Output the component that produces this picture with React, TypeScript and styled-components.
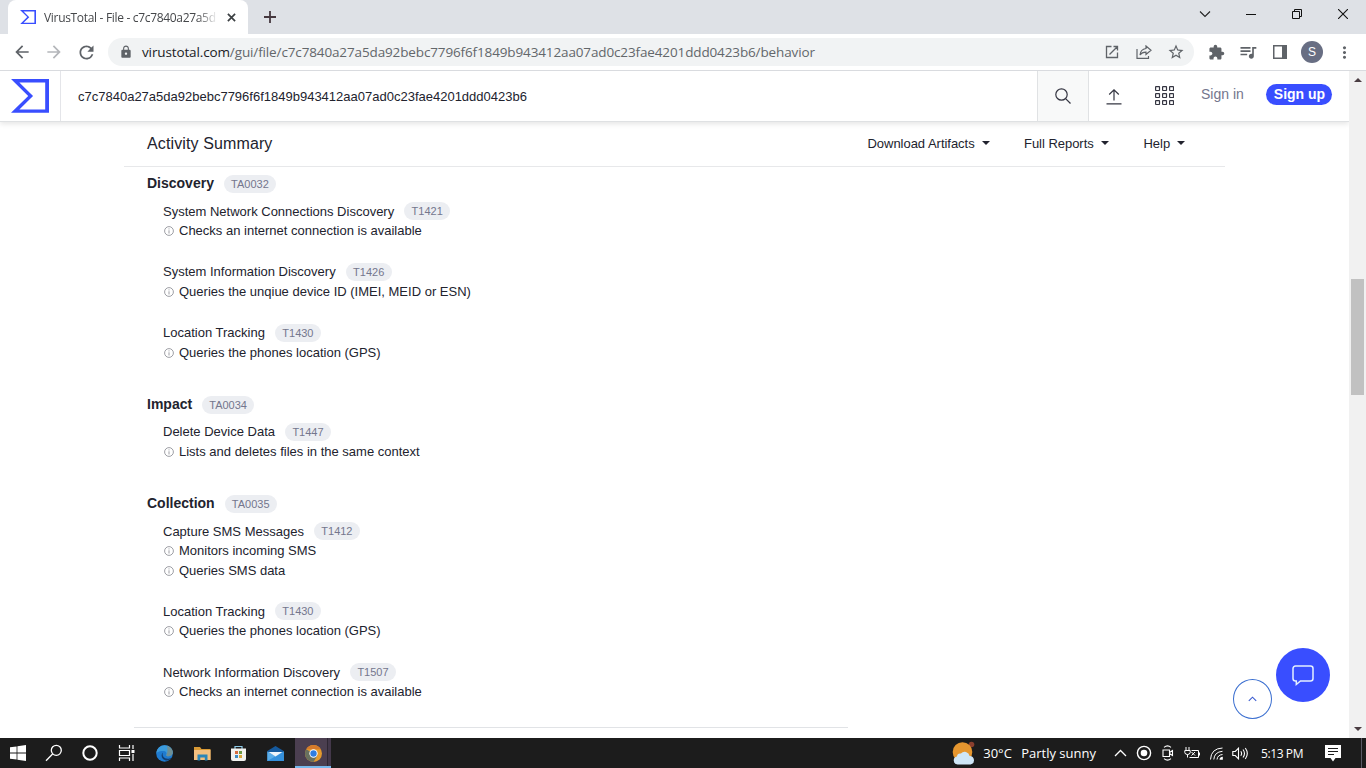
import React from "react";
import styled, { createGlobalStyle } from "styled-components";
import {
  MdArrowBack,
  MdArrowForward,
  MdRefresh,
  MdLock,
  MdExtension,
  MdQueueMusic,
  MdStarBorder,
  MdMoreVert,
} from "react-icons/md";

interface Technique {
  name: string;
  code: string;
  signatures: string[];
}

interface Tactic {
  name: string;
  code: string;
  techniques: Technique[];
}

const HASH = "c7c7840a27a5da92bebc7796f6f1849b943412aa07ad0c23fae4201ddd0423b6";

const tactics: Tactic[] = [
  {
    name: "Discovery",
    code: "TA0032",
    techniques: [
      {
        name: "System Network Connections Discovery",
        code: "T1421",
        signatures: ["Checks an internet connection is available"],
      },
      {
        name: "System Information Discovery",
        code: "T1426",
        signatures: ["Queries the unqiue device ID (IMEI, MEID or ESN)"],
      },
      {
        name: "Location Tracking",
        code: "T1430",
        signatures: ["Queries the phones location (GPS)"],
      },
    ],
  },
  {
    name: "Impact",
    code: "TA0034",
    techniques: [
      {
        name: "Delete Device Data",
        code: "T1447",
        signatures: ["Lists and deletes files in the same context"],
      },
    ],
  },
  {
    name: "Collection",
    code: "TA0035",
    techniques: [
      {
        name: "Capture SMS Messages",
        code: "T1412",
        signatures: ["Monitors incoming SMS", "Queries SMS data"],
      },
      {
        name: "Location Tracking",
        code: "T1430",
        signatures: ["Queries the phones location (GPS)"],
      },
      {
        name: "Network Information Discovery",
        code: "T1507",
        signatures: ["Checks an internet connection is available"],
      },
    ],
  },
];

export default function App() {
  return (
    <Screen>
      <GlobalStyle />
      <TabStrip />
      <Toolbar />
      <Viewport>
        <Page>
          <SiteHeader />
          <Report />
          <BackToTop>
            <svg width="9" height="6" viewBox="0 0 9 6" fill="none" stroke="#3a5bd0" strokeWidth="1.1">
              <path d="M.8 4.800l3.700-3.600 3.700 3.600" />
            </svg>
          </BackToTop>
          <ChatButton>
            <svg width="24" height="24" viewBox="0 0 24 24" fill="none" stroke="#e4f0ff" strokeWidth="1.5">
              <path d="M4.5 3h15A2.500 2.500 0 0 1 22 5.500v10a2.500 2.500 0 0 1-2.500 2.500H9.500L5.300 21.500V18H4.500A2.500 2.500 0 0 1 2 15.500v-10A2.500 2.500 0 0 1 4.500 3z" />
            </svg>
          </ChatButton>
        </Page>
        <Scrollbar>
          <ScrollArrow />
          <ScrollThumb />
          <ScrollArrow $down />
        </Scrollbar>
      </Viewport>
      <Taskbar />
    </Screen>
  );
}

function VtLogo({ width, color = "#394eff" }: { width: number; color?: string }) {
  return (
    <svg width={width} height={width * 0.89} viewBox="0 0 100 89" fill={color}>
      <path fillRule="evenodd" d="M45.292 44.500 0 89h100V0H0l45.292 44.500zM90 80H22l35.987-35.200L22 9h68v71z" />
    </svg>
  );
}

function TabStrip() {
  return (
    <Strip>
      <Tab>
        <VtLogo width={16} />
        <TabTitle>VirusTotal - File - c7c7840a27a5d</TabTitle>
        <svg width="9" height="9" viewBox="0 0 10 10" stroke="#3c4043" strokeWidth="1.900">
          <path d="M1 1l8 8M9 1l-8 8" />
        </svg>
      </Tab>
      <NewTab>
        <svg width="12" height="12" viewBox="0 0 12 12" stroke="#45383f" strokeWidth="1.800">
          <path d="M6 0v12M0 6h12" />
        </svg>
      </NewTab>
      <WindowButtons>
        <WindowButton>
          <svg width="12" height="8" viewBox="0 0 12 8" fill="none" stroke="#222" strokeWidth="1.100">
            <path d="M1 1.500l5 5 5-5" />
          </svg>
        </WindowButton>
        <WindowButton>
          <svg width="10" height="10" viewBox="0 0 10 10" stroke="#111">
            <path d="M0 5.500h10" />
          </svg>
        </WindowButton>
        <WindowButton>
          <svg width="10" height="10" viewBox="0 0 10 10" fill="none" stroke="#111">
            <path d="M.5 2.500h7v7h-7zM2.500 2.500v-2h7v7h-2" />
          </svg>
        </WindowButton>
        <WindowButton>
          <svg width="10" height="10" viewBox="0 0 10 10" stroke="#111" strokeWidth="1.100">
            <path d="M0 0l10 10M10 0L0 10" />
          </svg>
        </WindowButton>
      </WindowButtons>
    </Strip>
  );
}

function Toolbar() {
  return (
    <ToolbarRow>
      <ToolButton><MdArrowBack size={20} /></ToolButton>
      <ToolButton $color="#b4b6ba"><MdArrowForward size={20} /></ToolButton>
      <ToolButton><MdRefresh size={21} /></ToolButton>
      <Omnibox>
        <MdLock size={14} />
        <Url>
          <b>virustotal.com</b>/gui/file/{HASH}/behavior
        </Url>
        <ToolButton>
          <svg width="14" height="14" viewBox="0 0 14 14" fill="none" stroke="currentColor" strokeWidth="1.300">
            <path d="M6.500 1.500h-5v11h11v-5M8.500 1.500h4v4M12.500 1.500l-8 8" />
          </svg>
        </ToolButton>
        <ToolButton>
          <svg width="16" height="14" viewBox="0 0 16 14" fill="none" stroke="currentColor" strokeWidth="1.200">
            <path d="M1 4v9.300h11.500V11M10 1l5 4.300-5 4.200V7.200C7 7.100 5.300 8 4 10c.3-3.500 2.500-6 6-6.500z" />
          </svg>
        </ToolButton>
        <ToolButton><MdStarBorder size={18} /></ToolButton>
      </Omnibox>
      <ToolButton><MdExtension size={17} /></ToolButton>
      <ToolButton><MdQueueMusic size={20} /></ToolButton>
      <ToolButton>
        <svg width="14" height="14" viewBox="0 0 14 14">
          <path fill="currentColor" fillRule="evenodd" d="M0 0h14v14H0zM1.500 1.500v11H9v-11z" />
        </svg>
      </ToolButton>
      <ToolButton><Avatar>S</Avatar></ToolButton>
      <ToolButton><MdMoreVert size={19} /></ToolButton>
    </ToolbarRow>
  );
}

function SiteHeader() {
  return (
    <Header>
      <LogoCell><VtLogo width={38} /></LogoCell>
      <Query>{HASH}</Query>
      <SearchCell>
        <svg width="16" height="16" viewBox="0 0 16 16" fill="none" stroke="#353642" strokeWidth="1.200">
          <circle cx="6.500" cy="6.500" r="5.700" />
          <path d="M10.600 10.600l4.900 4.900" />
        </svg>
      </SearchCell>
      <HeaderIcon>
        <svg width="16" height="17" viewBox="0 0 16 17" fill="none" stroke="#353642" strokeWidth="1.200">
          <path d="M8 12.500V2M3.200 6.500L8 1.800l4.800 4.700M.5 15.900h15" />
        </svg>
      </HeaderIcon>
      <HeaderIcon>
        <svg width="19" height="20" viewBox="0 0 19 20" fill="none" stroke="#353642" strokeWidth="1.200">
          {[0, 7, 14].map((y) =>
            [0, 7, 14].map((x) => <rect key={`${x}-${y}`} x={x + 0.6} y={y + 0.6} width="3.900" height="3.900" rx=".4" />)
          )}
        </svg>
      </HeaderIcon>
      <SignIn>Sign in</SignIn>
      <SignUp>Sign up</SignUp>
    </Header>
  );
}

function Report() {
  return (
    <Main>
      <SummaryBar>
        <SummaryTitle>Activity Summary</SummaryTitle>
        <Dropdown $width={156.500}>Download Artifacts<Caret /></Dropdown>
        <Dropdown $width={119.500}>Full Reports<Caret /></Dropdown>
        <Dropdown $width={81.500}>Help<Caret /></Dropdown>
      </SummaryBar>
      {tactics.map((tactic) => (
        <TacticBlock key={tactic.code}>
          <TacticName>
            {tactic.name}
            <Badge $wide>{tactic.code}</Badge>
          </TacticName>
          {tactic.techniques.map((technique) => (
            <TechniqueBlock key={technique.code}>
              <Line>
                {technique.name}
                <Badge>{technique.code}</Badge>
              </Line>
              {technique.signatures.map((signature) => (
                <Line key={signature}>
                  <InfoIcon />
                  {signature}
                </Line>
              ))}
            </TechniqueBlock>
          ))}
        </TacticBlock>
      ))}
      <Divider />
    </Main>
  );
}

function InfoIcon() {
  return (
    <InfoSvg width="10" height="10" viewBox="0 0 10 10" fill="none" stroke="#85868e" strokeWidth=".8">
      <circle cx="5" cy="5" r="4.400" />
      <path d="M5 4.300v3.200M5 2.400v1" />
    </InfoSvg>
  );
}

function Taskbar() {
  return (
    <Bar>
      <Task>
        <svg width="16" height="16" viewBox="0 0 16 16" fill="#fff">
          <path d="M0 2.300l6.600-.9v6.200H0zM7.400 1.300L16 0v7.600H7.400zM0 8.400h6.600v6.200L0 13.700zM7.400 8.400H16V16l-8.600-1.200z" />
        </svg>
      </Task>
      <Task>
        <svg width="18" height="18" viewBox="0 0 18 18" fill="none" stroke="#fff" strokeWidth="1.300">
          <circle cx="11.300" cy="6.300" r="5" />
          <path d="M7.600 10L1 16.800" />
        </svg>
      </Task>
      <Task>
        <svg width="16" height="16" viewBox="0 0 16 16" fill="none" stroke="#fff" strokeWidth="2">
          <circle cx="8" cy="8" r="6.700" />
        </svg>
      </Task>
      <Task>
        <svg width="17" height="16" viewBox="0 0 17 16" fill="none" stroke="#fff" strokeWidth="1.200">
          <path d="M1.500 0v3h10V0M1.500 5.500h10v5h-10zM1.500 16v-3h10v3M15 0v4M15 9v7" />
          <path d="M13.500 5h3v3h-3z" fill="#fff" stroke="none" />
        </svg>
      </Task>
      <Task $width={41}>
        <svg width="17" height="17" viewBox="0 0 17 17">
          <circle cx="8.500" cy="8.500" r="8.300" fill="#1f7bd0" />
          <path d="M.3 8C1 3 4.600.2 8.600.2c5 0 8.200 3.600 8.200 7 0 2.500-2 4-4.300 4-1.500 0-2.500-.6-2.200-1.300.9-1.800-.3-4-3-4C4.300 5.900 1.500 6.500.3 8z" fill="#3b9bdc" />
          <path d="M11 1c3.500 1 5.800 3.500 5.800 6.200 0 2.500-2 4-4.300 4-1.500 0-2.500-.6-2.200-1.300C12 7 11.500 4 11 1z" fill="#6f8f94" />
          <path d="M7 7.500c-1.500 3.500 1.500 7 6.500 6 1-.2 1.700-.6 2.300-1-2 3.800-6.500 3.600-8.800 1.500-2-2-1.800-5 0-6.500z" fill="#123f72" />
        </svg>
      </Task>
      <Task $width={34}>
        <svg width="17" height="15" viewBox="0 0 17 15">
          <path d="M0 1h6l1.500 2H16.500v11H0z" fill="#d99a35" />
          <path d="M0 4h16.500v10H0z" fill="#f5c080" />
          <path d="M3.500 14.500V8.500h10v6h-2.700v-3H6.300v3z" fill="#2e86b8" />
        </svg>
      </Task>
      <Task $width={39}>
        <svg width="15" height="17" viewBox="0 0 15 17">
          <path d="M4 4V1.500h7V4" fill="none" stroke="#8ecbe8" strokeWidth="1.200" />
          <path d="M0 3.500h15V14a2 2 0 0 1-2 2H2a2 2 0 0 1-2-2z" fill="#f2f2ef" />
          <path d="M4 6h3v3H4z" fill="#d66c3f" />
          <path d="M8 6h3v3H8z" fill="#6d9a46" />
          <path d="M4 10h3v3H4z" fill="#3c8cc4" />
          <path d="M8 10h3v3H8z" fill="#d9a63a" />
        </svg>
      </Task>
      <Task $width={35}>
        <svg width="17" height="15" viewBox="0 0 17 15">
          <path d="M.3 5L8.500 0l8.200 5v10H.3z" fill="#155a9e" />
          <path d="M.3 5.500L8.500 10l8.200-4.500V15H.3z" fill="#5aade9" />
          <path d="M.3 15l16.400-9.500V15z" fill="#3490dc" />
          <path d="M1.500 6h14l-7 4.500z" fill="#eef5fb" />
        </svg>
      </Task>
      <ActiveTask>
        <svg width="17" height="17" viewBox="0 0 16 16">
          <circle cx="8" cy="8" r="8" fill="#e49a2d" />
          <path d="M8 8L1.100 4A8 8 0 0 0 8 16l3.500-6z" fill="#68705f" />
          <path d="M1.100 4A8 8 0 0 1 14.900 4H8z" fill="#d67a2b" />
          <circle cx="8" cy="8" r="3.900" fill="#fff" />
          <circle cx="8" cy="8" r="3" fill="#2f7de0" />
        </svg>
      </ActiveTask>
      <Weather>
        <svg width="23" height="24" viewBox="0 0 23 24">
          <circle cx="19.500" cy="3.500" r="2.800" fill="#8a3f2e" />
          <circle cx="10.500" cy="11" r="9.800" fill="#e5962f" />
          <path d="M5.500 23.500a4 4 0 0 1-.6-7.900 3.500 3.500 0 0 1 4-3 5 5 0 0 1 8.700 2.400 4.300 4.300 0 0 1 1 8.500z" fill="#cfe6f7" />
        </svg>
        <WeatherText $width={30}>30°C</WeatherText>
        <WeatherText>Partly sunny</WeatherText>
      </Weather>
      <Tray>
        <svg width="13" height="8" viewBox="0 0 13 8" fill="none" stroke="#fff" strokeWidth="1.300">
          <path d="M1 7l5.500-5.500L12 7" />
        </svg>
      </Tray>
      <Tray>
        <svg width="16" height="16" viewBox="0 0 16 16" fill="none" stroke="#fff" strokeWidth="1.400">
          <circle cx="8" cy="8" r="6.600" />
          <circle cx="8" cy="8" r="3.300" fill="#fff" stroke="none" />
        </svg>
      </Tray>
      <Tray>
        <svg width="12" height="16" viewBox="0 0 12 16" fill="none" stroke="#fff" strokeWidth="1.100">
          <path d="M2 2.300Q5.500-.6 9 2.300M2 13.700q3.500 2.900 7 0M1 5h6.500v6.500H1zM7.500 7.500l3-2v5l-3-2" />
        </svg>
      </Tray>
      <Tray>
        <svg width="16" height="13" viewBox="0 0 16 13" fill="none" stroke="#fff">
          <path d="M2 0v3M5 0v3M.8 3.500h5.400v2Q6 7.500 3.500 7.500T.8 5.500zM3.500 7.500V10.500M5.500 10.500h9v-7H7.500M15.500 5.500v3M7.500 5l3.500 3.500M11 5L7.500 8.500" />
        </svg>
      </Tray>
      <Tray $width={25}>
        <svg width="13" height="13" viewBox="0 0 13 13" fill="none" stroke="#fff">
          <path d="M.5 12.500Q1 1.500 12.500 1M3.800 12.500Q4.300 5 12.500 4.300M7 12.500Q7.500 8 12.500 7.500" />
          <path d="M9.500 12.800q.2-2.800 3.300-3v3z" fill="#fff" stroke="none" />
        </svg>
      </Tray>
      <Tray $width={23}>
        <svg width="17" height="13" viewBox="0 0 17 13" fill="none" stroke="#fff" strokeWidth="1.100">
          <path d="M.8 4.500h2.500L6.500 1.200v10.600L3.300 8.500H.8zM8.800 4.300q1.600 2.200 0 4.400M11 2.500q3 4 0 8M13.300 1q4 5.500 0 11" />
        </svg>
      </Tray>
      <Clock>5:13 PM</Clock>
      <svg width="16" height="17" viewBox="0 0 16 17">
        <path d="M0 0h16v13h-5.500L8 16.500 5.500 13H0z" fill="#fff" />
        <path d="M3 3.500h10M3 6.500h10M3 9.500h6" stroke="#1c1c1c" />
      </svg>
      <ShowDesktop />
    </Bar>
  );
}

const GlobalStyle = createGlobalStyle`
  * {
    box-sizing: border-box;
  }

  body {
    margin: 0;
    overflow: hidden;
    font-family: "Liberation Sans", Arial, sans-serif;
  }

  svg {
    display: block;
    flex: none;
  }
`;

const Screen = styled.div`
  display: flex;
  flex-direction: column;
  width: 1366px;
  height: 768px;
  background: #fff;
  white-space: nowrap;
`;

const Strip = styled.div`
  display: flex;
  height: 34px;
  padding-left: 8px;
  background: #dee1e6;
`;

const Tab = styled.div`
  display: flex;
  align-items: center;
  width: 240px;
  padding: 0 12px;
  border-radius: 8px 8px 0 0;
  background: #fff;
`;

const TabTitle = styled.span`
  flex: 1;
  margin: 0 9px 0 8px;
  font-family: "Open Sans", sans-serif;
  font-size: 12px;
  letter-spacing: -0.32px;
  color: #45474a;
  mask-image: linear-gradient(to right, #000 88%, transparent);
`;

const NewTab = styled.div`
  display: flex;
  align-items: center;
  margin-left: 16px;
`;

const WindowButtons = styled.div`
  display: flex;
  height: 28px;
  margin-left: auto;
`;

const WindowButton = styled.div`
  display: flex;
  align-items: center;
  justify-content: center;
  width: 46px;
`;

const ToolbarRow = styled.div`
  display: flex;
  align-items: center;
  height: 37px;
  padding: 0 6px;
  border-bottom: 1px solid #d9dbdf;
`;

const ToolButton = styled.div<{ $color?: string }>`
  display: flex;
  align-items: center;
  justify-content: center;
  width: 32px;
  color: ${({ $color }) => $color ?? "#5f6368"};
`;

const Omnibox = styled.div`
  display: flex;
  align-items: center;
  width: 1086px;
  height: 28px;
  margin: 0 6px;
  padding: 0 2px 0 11px;
  border-radius: 14px;
  background: #f1f3f4;
  color: #5f6368;
`;

const Url = styled.span`
  flex: 1;
  margin-left: 9px;
  font-family: "Open Sans", sans-serif;
  font-size: 13.5px;
  letter-spacing: -0.13px;
  color: #63676b;

  b {
    font-weight: 400;
    color: #202124;
  }
`;

const Avatar = styled.div`
  width: 22px;
  height: 22px;
  border-radius: 50%;
  background: #686e83;
  color: #fff;
  font-size: 12px;
  line-height: 22px;
  text-align: center;
`;

const Viewport = styled.div`
  display: flex;
  height: 667px;
`;

const Page = styled.div`
  width: 1349px;
  overflow: hidden;
`;

const Header = styled.header`
  display: flex;
  align-items: center;
  height: 51px;
  border-bottom: 1px solid #dfe1e3;
  box-shadow: 0 2px 5px rgba(0, 0, 0, 0.1);
`;

const LogoCell = styled.div`
  display: flex;
  align-items: center;
  width: 61px;
  height: 50px;
  padding-left: 11px;
  border-right: 1px solid #e4e5e9;
`;

const Query = styled.div`
  flex: 1;
  padding-left: 17px;
  font-size: 13px;
  color: #22232e;
`;

const SearchCell = styled.div`
  display: flex;
  align-items: center;
  justify-content: center;
  width: 52px;
  height: 50px;
  border: solid #e0e2e4;
  border-width: 0 1px;
  background: #f8f9f9;
`;

const HeaderIcon = styled.div`
  display: flex;
  justify-content: center;
  width: 50px;
`;

const SignIn = styled.span`
  width: 77px;
  padding: 0 0 4px 12px;
  font-size: 14px;
  color: #74768d;
`;

const SignUp = styled.span`
  width: 66px;
  height: 21px;
  margin: 0 17px 3px 0;
  padding-left: 1px;
  border-radius: 11px;
  background: #394eff;
  color: #fff;
  font-size: 14px;
  font-weight: 700;
  line-height: 21px;
  text-align: center;
`;

const Main = styled.main`
  padding-left: 124px;
  font-size: 13px;
  color: #22232e;
`;

const SummaryBar = styled.div`
  display: flex;
  align-items: center;
  width: 1101px;
  height: 45px;
  margin-bottom: 6.4px;
  padding-left: 23px;
  border-bottom: 1px solid #e7e8ea;
`;

const SummaryTitle = styled.h2`
  flex: 1;
  margin: 0;
  font-size: 16px;
  font-weight: 400;
  letter-spacing: 0.12px;
`;

const Dropdown = styled.div<{ $width: number }>`
  display: flex;
  align-items: center;
  width: ${({ $width }) => $width}px;
  padding-bottom: 2px;
  letter-spacing: -0.03px;
`;

const Caret = styled.i`
  margin-left: 7px;
  border: 4px solid transparent;
  border-top-color: #22232e;
  border-bottom: 0;
`;

const TacticBlock = styled.section`
  margin-left: 23px;
  padding-bottom: 10.5px;
`;

const Badge = styled.span<{ $wide?: boolean }>`
  width: ${({ $wide }) => ($wide ? 52 : 46)}px;
  height: 18px;
  margin-left: 10px;
  border-radius: 9px;
  background: #eceef2;
  color: #74768d;
  font-size: 11px;
  font-weight: 400;
  line-height: 18px;
  text-align: center;
`;

const TacticName = styled.div`
  display: flex;
  align-items: center;
  height: 20px;
  margin-bottom: 8px;
  padding-bottom: 1px;
  font-size: 14px;
  font-weight: 700;

  ${Badge} {
    margin-top: 2px;
  }
`;

const TechniqueBlock = styled.div`
  margin: 0 0 21.75px 16px;
`;

const Line = styled.div`
  display: flex;
  align-items: center;
  height: 19.5px;
`;

const InfoSvg = styled.svg`
  margin: 1px 5px 0 1px;
`;

const Divider = styled.hr`
  width: 714px;
  margin: -6.65px 0 0 10px;
  border: 0;
  border-top: 1px solid #e1e3e6;
`;

const BackToTop = styled.button`
  position: absolute;
  top: 679px;
  left: 1233px;
  display: flex;
  align-items: center;
  justify-content: center;
  width: 39px;
  height: 40px;
  padding: 0;
  border: 1px solid #3b6fd0;
  border-radius: 50%;
  background: #fff;
`;

const ChatButton = styled.button`
  position: absolute;
  top: 648px;
  left: 1276px;
  display: flex;
  align-items: center;
  justify-content: center;
  width: 54px;
  height: 54px;
  padding: 0;
  border: 0;
  border-radius: 50%;
  background: #394eff;
`;

const Scrollbar = styled.div`
  display: flex;
  flex-direction: column;
  align-items: center;
  width: 17px;
  padding: 7px 0;
  background: #f1f1f1;
`;

const ScrollArrow = styled.i<{ $down?: boolean }>`
  margin-top: ${({ $down }) => ($down ? "auto" : 0)};
  border: 4px solid transparent;
  border-bottom: ${({ $down }) => ($down ? "0" : "4px solid #4a3d42")};
  border-top: ${({ $down }) => ($down ? "4px solid #4a3d42" : "0")};
`;

const ScrollThumb = styled.div`
  width: 13px;
  height: 116px;
  margin-top: 197px;
  background: #c1c1c1;
`;

const Bar = styled.div`
  display: flex;
  align-items: center;
  height: 30px;
  background: #1c1c1c;
  color: #fff;
  font-family: "Open Sans", sans-serif;
`;

const Task = styled.div<{ $width?: number }>`
  display: flex;
  align-items: center;
  justify-content: center;
  width: ${({ $width }) => $width ?? 36}px;
  height: 30px;
`;

const ActiveTask = styled(Task)`
  margin-left: 2px;
  padding-top: 2px;
  border-bottom: 2px solid #76b9ed;
  background: linear-gradient(to right, #4b3f50 32px, #2e2733 32px, #2e2733 33px, #43384a 33px);
`;

const Weather = styled.div`
  display: flex;
  align-items: center;
  margin: 0 12px 0 auto;
`;

const WeatherText = styled.span<{ $width?: number }>`
  width: ${({ $width }) => ($width ? `${$width}px` : "auto")};
  margin-left: 8px;
  font-size: 13px;
`;

const Tray = styled.div<{ $width?: number }>`
  display: flex;
  align-items: center;
  justify-content: center;
  width: ${({ $width }) => $width ?? 24}px;
`;

const Clock = styled.span`
  width: 73px;
  padding-left: 9px;
  font-size: 12px;
  letter-spacing: -0.4px;
`;

const ShowDesktop = styled.div`
  width: 5px;
  height: 30px;
  margin-left: 20px;
  border-left: 1px solid #5a5a66;
`;
